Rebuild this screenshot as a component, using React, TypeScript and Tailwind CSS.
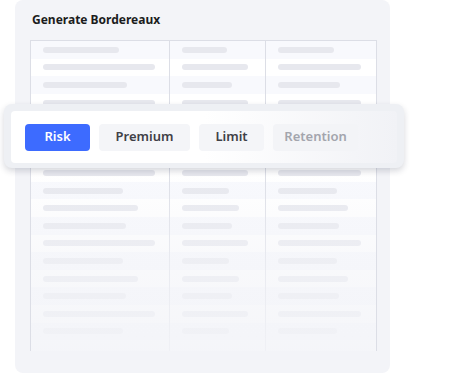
import React from 'react';

const col1 = [76, 112, 84, 112, 80, 95, 83, 112, 80, 95, 83, 112, 80, 95, 83, 112, 80];
const col2 = [45, 66, 50, 66, 47, 57, 50, 66, 47, 57, 50, 66, 47, 57, 50, 66, 47];
const col3 = [56, 83, 62, 83, 59, 70, 61, 83, 59, 70, 61, 83, 59, 70, 61, 83, 59];

const tabs = [
  { label: 'Risk', w: 'w-[65px]', cls: 'bg-[#3d6bff] text-white' },
  { label: 'Premium', w: 'w-[91px]', cls: 'bg-[#f4f5f8] text-[#3f4046]' },
  { label: 'Limit', w: 'w-[65px]', cls: 'bg-[#f4f5f8] text-[#3f4046]' },
  { label: 'Retention', w: 'w-[85px]', cls: 'bg-[#f3f4f7] text-[#a3a5ad]' },
];

function Cell({ width, last }: { width: number; last?: boolean }) {
  return (
    <div className={`flex items-center ${last ? 'pl-[12px]' : 'pl-[12px] border-r border-[#dcdee6]'}`}>
      <div className="h-[6px] rounded-full bg-[#e7e8ee]" style={{ width }} />
    </div>
  );
}

export default function App() {
  return (
    <div className="relative w-[462px] h-[375px] bg-white overflow-hidden" style={{ fontFamily: '"Noto Sans", "Open Sans", sans-serif' }}>
      {/* Card */}
      <div className="ml-[15px] w-[375px] h-[373px] bg-[#f3f4f8] rounded-lg flex flex-col pl-[15px] pr-[13px]">
        <h2 className="pt-[11px] pl-[2px] text-[12px] font-bold text-[#1b1c20] leading-[18px]">Generate Bordereaux</h2>

        <div className="relative mt-[11px] h-[311px] border border-[#dcdee6] border-b-0 bg-white overflow-hidden">
          {col1.map((w, i) => (
            <div
              key={i}
              className={`grid grid-cols-[139px_96px_1fr] h-[17.6px] ${i % 2 === 0 ? 'bg-[#f8f9fd]' : 'bg-white'}`}
            >
              <Cell width={w} />
              <Cell width={col2[i]} />
              <Cell width={col3[i]} last />
            </div>
          ))}
          <div className="grid grid-cols-[139px_96px_1fr] h-[12px]">
            <div className="border-r border-[#dcdee6]" />
            <div className="border-r border-[#dcdee6]" />
            <div />
          </div>
          {/* fade */}
          <div className="absolute left-[-1px] right-[-1px] bottom-0 h-[180px] bg-gradient-to-b from-[#f3f4f8]/0 via-[#f3f4f8]/55 to-[#f3f4f8]/85" />
        </div>
      </div>

      {/* Tab popup */}
      <div className="absolute left-[4px] top-[104px] w-[400px] h-[64px] rounded-lg bg-[#eef0f4] p-[7px] shadow-[0_3px_6px_rgba(30,35,60,0.18)]">
        <div className="h-[52px] rounded bg-gradient-to-r from-white via-white to-[#f1f2f6] flex items-center gap-[9px] pl-[14px]">
          {tabs.map(t => (
            <div
              key={t.label}
              className={`${t.w} h-[27px] rounded flex items-center justify-center text-[13px] font-semibold ${t.cls}`}
            >
              {t.label}
            </div>
          ))}
        </div>
      </div>
    </div>
  );
}
